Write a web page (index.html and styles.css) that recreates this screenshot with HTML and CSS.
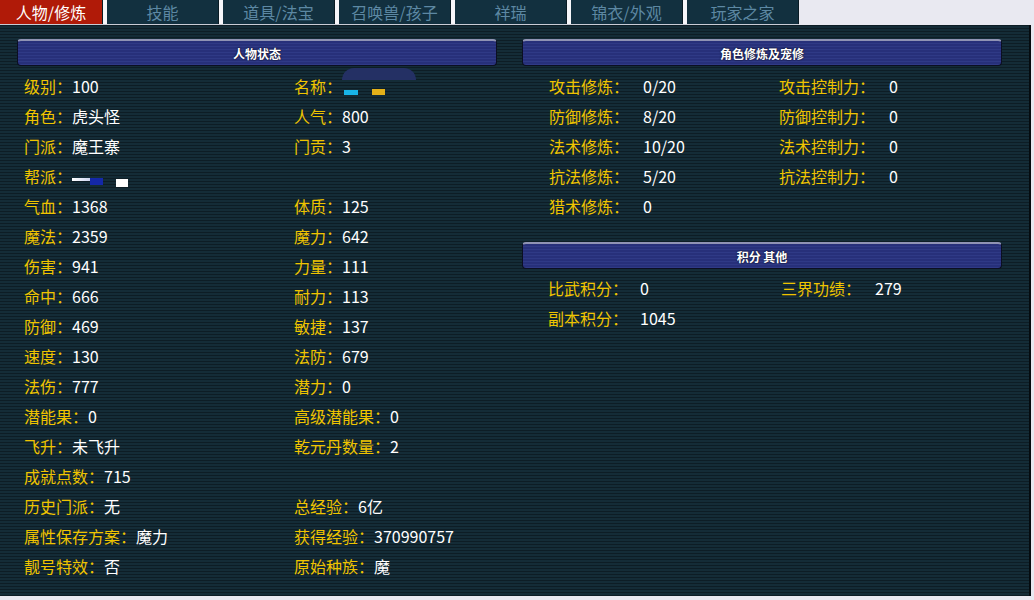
FILE: index.html
```html
<!DOCTYPE html>
<html lang="zh-CN">
<head>
  <meta charset="UTF-8" />
  <title>角色信息</title>
  <link rel="stylesheet" href="styles.css">
</head>
<body>

  <div class="tabs">
    <div class="tab active">人物/修炼</div>
    <div class="tab">技能</div>
    <div class="tab">道具/法宝</div>
    <div class="tab">召唤兽/孩子</div>
    <div class="tab">祥瑞</div>
    <div class="tab">锦衣/外观</div>
    <div class="tab">玩家之家</div>
  </div>

  <div class="panel">
    <div class="col-left">
      <div class="bar">人物状态</div>
      <div class="grid-left">
        <div class="item"><span class="k">级别：</span><span class="v">100</span></div>
        <div class="item"><span class="k">名称：</span><span class="v mask-name"><i class="blob"></i><i class="chip cyan"></i><i class="chip gold"></i></span></div>
        <div class="item"><span class="k">角色：</span><span class="v">虎头怪</span></div>
        <div class="item"><span class="k">人气：</span><span class="v">800</span></div>
        <div class="item"><span class="k">门派：</span><span class="v">魔王寨</span></div>
        <div class="item"><span class="k">门贡：</span><span class="v">3</span></div>
        <div class="item"><span class="k">帮派：</span><span class="v mask-guild"><i class="streak"></i><i class="chip blue"></i><i class="chip white"></i></span></div>
        <div class="item"></div>
        <div class="item"><span class="k">气血：</span><span class="v">1368</span></div>
        <div class="item"><span class="k">体质：</span><span class="v">125</span></div>
        <div class="item"><span class="k">魔法：</span><span class="v">2359</span></div>
        <div class="item"><span class="k">魔力：</span><span class="v">642</span></div>
        <div class="item"><span class="k">伤害：</span><span class="v">941</span></div>
        <div class="item"><span class="k">力量：</span><span class="v">111</span></div>
        <div class="item"><span class="k">命中：</span><span class="v">666</span></div>
        <div class="item"><span class="k">耐力：</span><span class="v">113</span></div>
        <div class="item"><span class="k">防御：</span><span class="v">469</span></div>
        <div class="item"><span class="k">敏捷：</span><span class="v">137</span></div>
        <div class="item"><span class="k">速度：</span><span class="v">130</span></div>
        <div class="item"><span class="k">法防：</span><span class="v">679</span></div>
        <div class="item"><span class="k">法伤：</span><span class="v">777</span></div>
        <div class="item"><span class="k">潜力：</span><span class="v">0</span></div>
        <div class="item"><span class="k">潜能果：</span><span class="v">0</span></div>
        <div class="item"><span class="k">高级潜能果：</span><span class="v">0</span></div>
        <div class="item"><span class="k">飞升：</span><span class="v">未飞升</span></div>
        <div class="item"><span class="k">乾元丹数量：</span><span class="v">2</span></div>
        <div class="item"><span class="k">成就点数：</span><span class="v">715</span></div>
        <div class="item"></div>
        <div class="item"><span class="k">历史门派：</span><span class="v">无</span></div>
        <div class="item"><span class="k">总经验：</span><span class="v">6亿</span></div>
        <div class="item"><span class="k">属性保存方案：</span><span class="v">魔力</span></div>
        <div class="item"><span class="k">获得经验：</span><span class="v">370990757</span></div>
        <div class="item"><span class="k">靓号特效：</span><span class="v">否</span></div>
        <div class="item"><span class="k">原始种族：</span><span class="v">魔</span></div>
      </div>
    </div>

    <div class="col-right">
      <div class="bar">角色修炼及宠修</div>
      <div class="grid-right">
        <span class="k">攻击修炼：</span><span class="v">0/20</span><span class="k">攻击控制力：</span><span class="v">0</span>
        <span class="k">防御修炼：</span><span class="v">8/20</span><span class="k">防御控制力：</span><span class="v">0</span>
        <span class="k">法术修炼：</span><span class="v">10/20</span><span class="k">法术控制力：</span><span class="v">0</span>
        <span class="k">抗法修炼：</span><span class="v">5/20</span><span class="k">抗法控制力：</span><span class="v">0</span>
        <span class="k">猎术修炼：</span><span class="v">0</span><span></span><span></span>
      </div>

      <div class="bar bar-gap">积分 其他</div>
      <div class="grid-score">
        <span class="k">比武积分：</span><span class="v">0</span><span class="k">三界功绩：</span><span class="v">279</span>
        <span class="k">副本积分：</span><span class="v">1045</span><span></span><span></span>
      </div>
    </div>
  </div>

</body>
</html>
```

FILE: styles.css
```css
* {
  box-sizing: border-box;
}

body {
  margin: 0;
  background-color: #e9e9f1;
  font-family: "Noto Sans CJK SC", "Microsoft YaHei", sans-serif;
  font-size: 16px;
}

/* tab strip */
.tabs {
  display: flex;
  gap: 4px;
  height: 25px;
  background-color: #f6f6fa;
  border-bottom: 1px solid #c9ccd6;
  width: 799px;
}

.tab {
  width: 112px;
  height: 24px;
  line-height: 24px;
  text-align: center;
  background-color: #12303f;
  color: #5d88a3;
  border-right: 1px solid #0a1b24;
}

.tab.active {
  width: 103px;
  background-color: #b01a08;
  color: #ffffff;
}

/* main dark panel with scanlines */
.panel {
  display: flex;
  gap: 25px;
  width: 1031px;
  height: 571px;
  padding: 14px 0 0 17px;
  background: repeating-linear-gradient(
    to bottom,
    #0d1d25 0px,
    #0d1d25 1px,
    #142c37 1px,
    #142c37 3px
  );
  border-right: 2px solid #050c10;
}

.col-left,
.col-right {
  width: 480px;
}

.bar {
  height: 27px;
  line-height: 25px;
  text-align: center;
  color: #ffffff;
  font-size: 12px;
  font-weight: bold;
  text-shadow: 0 0 2px #000;
  background: repeating-linear-gradient(
    to bottom,
    #27307a 0px,
    #27307a 2px,
    #2f3a86 2px,
    #2f3a86 3px
  );
  border: 1px solid #0b0f22;
  border-top: 2px solid #8f93b4;
  border-radius: 4px;
}

.bar-gap {
  margin-top: 21px;
}

.k {
  color: #efc400;
}

.v {
  color: #ffffff;
}

.grid-left {
  display: grid;
  grid-template-columns: 270px 210px;
  padding: 5px 0 0 7px;
}

.item {
  display: flex;
  height: 30px;
  line-height: 30px;
}

.grid-right {
  display: grid;
  grid-template-columns: 94px 136px 110px 1fr;
  grid-auto-rows: 30px;
  line-height: 30px;
  padding: 5px 0 0 27px;
}

.grid-score {
  display: grid;
  grid-template-columns: 92px 141px 94px 1fr;
  grid-auto-rows: 30px;
  line-height: 30px;
  padding: 4px 0 0 26px;
}

/* masked name / guild values */
.mask-name,
.mask-guild {
  position: relative;
  width: 80px;
}

.blob {
  position: absolute;
  left: 0;
  top: -3px;
  width: 74px;
  height: 12px;
  border-radius: 12px 12px 0 0;
  background-color: #243064;
}

.chip {
  position: absolute;
  height: 5px;
}

.chip.cyan {
  left: 2px;
  top: 19px;
  width: 14px;
  background-color: #18b4e8;
}

.chip.gold {
  left: 30px;
  top: 18px;
  width: 13px;
  height: 6px;
  background-color: #e3b019;
}

.streak {
  position: absolute;
  left: 0;
  top: 17px;
  width: 20px;
  height: 3px;
  background: linear-gradient(to right, #ffffff, #c8d0ee);
}

.chip.blue {
  left: 18px;
  top: 17px;
  width: 13px;
  height: 7px;
  background-color: #1428a8;
}

.chip.white {
  left: 44px;
  top: 18px;
  width: 12px;
  height: 8px;
  background-color: #ffffff;
}
```
